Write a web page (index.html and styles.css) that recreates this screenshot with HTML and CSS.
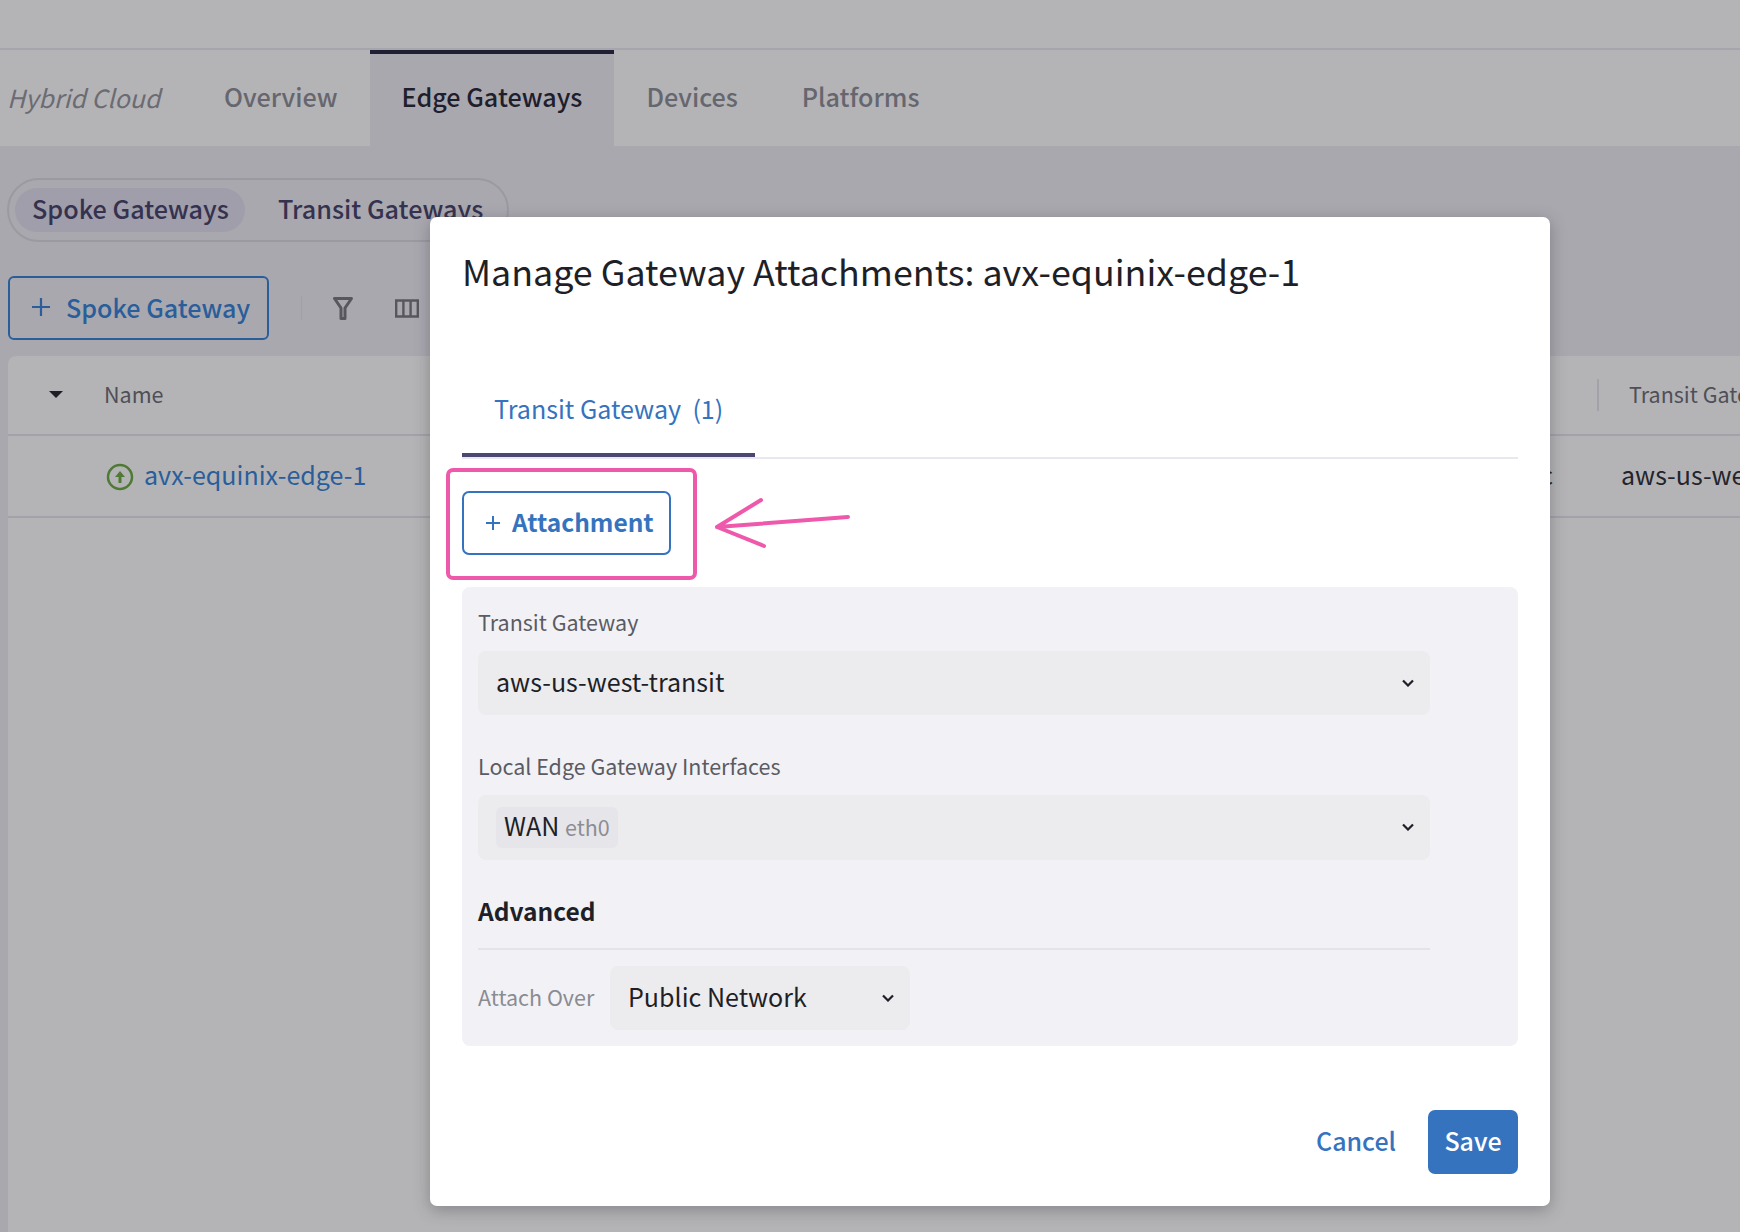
FILE: index.html
```html
<!DOCTYPE html>
<html lang="en">
<head>
<meta charset="utf-8">
<title>Manage Gateway Attachments</title>
<link rel="stylesheet" href="styles.css">
</head>
<body>
<div class="page">
  <div class="topbar"></div>
  <nav class="nav">
    <span class="crumb">Hybrid Cloud</span>
    <a class="nav-tab">Overview</a>
    <a class="nav-tab nav-active">Edge Gateways</a>
    <a class="nav-tab">Devices</a>
    <a class="nav-tab">Platforms</a>
  </nav>
  <main class="content">
    <div class="segmented">
      <span class="seg seg-on">Spoke Gateways</span>
      <span class="seg">Transit Gateways</span>
    </div>
    <div class="toolbar">
      <button class="add-btn"><svg class="add-plus" viewBox="0 0 20 20"><path d="M10 1v18M1 10h18"/></svg>Spoke Gateway</button>
      <span class="tool-sep"></span>
      <svg class="icon-filter" viewBox="0 0 20 23"><path d="M1.500 1.500h17l-6.500 9.500v10.500h-4V11z"/></svg>
      <svg class="icon-cols" viewBox="0 0 24 19"><path d="M1.200 1.500h21.600v16H1.200zM8.400 1.500v16M15.600 1.500v16"/></svg>
    </div>
    <section class="table">
      <div class="thead">
        <svg class="caret" viewBox="0 0 14 8"><path d="M0 0h14L7 7z"/></svg>
        <span class="th-name">Name</span>
        <span class="th-sep"></span>
        <span class="th-transit">Transit Gateway</span>
      </div>
      <div class="trow">
        <svg class="status" viewBox="0 0 28 28"><circle cx="14" cy="14" r="12"/><path class="status-fill" d="M14 8l5 6h-3.500v6h-3v-6H9z"/></svg>
        <a class="gw-link">avx-equinix-edge-1</a>
        <span class="td-hidden">public</span>
        <span class="td-transit">aws-us-west-transit</span>
      </div>
    </section>
  </main>

  <div class="modal">
    <h2 class="modal-title">Manage Gateway Attachments: avx-equinix-edge-1</h2>
    <div class="tabs">
      <span class="tab">Transit Gateway&nbsp; (1)</span>
    </div>
    <button class="attach-btn"><svg class="attach-plus" viewBox="0 0 16 16"><path d="M8 1v14M1 8h14"/></svg>Attachment</button>
    <div class="panel">
      <div class="label">Transit Gateway</div>
      <div class="select">
        <span>aws-us-west-transit</span>
        <svg class="chev" viewBox="0 0 12 8"><path d="M1 1.500l5 5 5-5"/></svg>
      </div>
      <div class="label label-next">Local Edge Gateway Interfaces</div>
      <div class="select select-multi">
        <span class="chip">WAN <small class="chip-sub">eth0</small></span>
        <svg class="chev" viewBox="0 0 12 8"><path d="M1 1.500l5 5 5-5"/></svg>
      </div>
      <div class="adv-title">Advanced</div>
      <div class="adv-row">
        <span class="adv-label">Attach Over</span>
        <div class="select select-small">
          <span>Public Network</span>
          <svg class="chev" viewBox="0 0 12 8"><path d="M1 1.500l5 5 5-5"/></svg>
        </div>
      </div>
    </div>
    <footer class="modal-foot">
      <button class="btn-cancel">Cancel</button>
      <button class="btn-save">Save</button>
    </footer>
    <div class="pink-box"></div>
    <svg class="pink-arrow" viewBox="0 0 140 56"><path d="M47 3L3 30l47 19M3 30l131-10"/></svg>
  </div>
</div>
</body>
</html>
```
FILE: styles.css
```css
* { box-sizing: border-box; }
html, body { margin: 0; height: 100%; }
body {
  font-family: "Noto Sans CJK SC", "Noto Sans", sans-serif;
  color: #1f1f27;
  overflow: hidden;
}
button { font-family: inherit; cursor: pointer; }
svg { display: block; flex: none; }

.page {
  position: relative;
  width: 1740px;
  height: 1232px;
  background: #a9a8af;
  overflow: hidden;
  display: flex;
  flex-direction: column;
}
.topbar {
  height: 50px;
  background: #b4b4b6;
  border-bottom: 2px solid #a6a5ad;
}
.nav {
  height: 96px;
  background: #b4b4b6;
  display: flex;
  align-items: stretch;
}
.crumb {
  width: 192px;
  padding-left: 7px;
  font-size: 25px;
  font-style: italic;
  line-height: 94px;
  color: #6b6b73;
}
.nav-tab {
  padding: 0 32px;
  font-size: 25.150px;
  font-weight: 500;
  line-height: 92px;
  color: #66666f;
}
.nav-active {
  color: #1f1e2c;
  background: #a9a8af;
  border-top: 4px solid #211f33;
  line-height: 84px;
}
.content {
  flex: 1;
  display: flex;
  flex-direction: column;
  padding: 32px 0 0 7px;
}
.segmented {
  width: 502px;
  height: 64px;
  border: 2px solid #9a9aa1;
  border-radius: 32px;
  padding: 8px 6px;
  display: flex;
  gap: 33px;
  align-items: stretch;
}
.seg {
  font-size: 25.200px;
  font-weight: 500;
  line-height: 41px;
  color: #35324f;
  white-space: nowrap;
}
.seg-on {
  background: #9f9eaa;
  border-radius: 22px;
  padding: 0 17px;
  width: 230px;
}
.toolbar {
  display: flex;
  align-items: center;
  margin: 34px 0 16px 1px;
}
.add-btn {
  flex: none;
  width: 261px;
  height: 64px;
  background: transparent;
  border: 2px solid #2a5e9b;
  border-radius: 6px;
  padding: 0 0 2px 21px;
  display: flex;
  align-items: center;
  gap: 15px;
  font-size: 25.100px;
  font-weight: 500;
  color: #2a5e9b;
  white-space: nowrap;
}
.add-plus { width: 20px; height: 20px; }
.add-plus path { stroke: #2a5e9b; stroke-width: 2.200; fill: none; }
.tool-sep {
  width: 1px;
  height: 24px;
  background: #9f9fa6;
  margin: 0 31px 0 32px;
}
.icon-filter { width: 20px; height: 23px; }
.icon-filter path { fill: none; stroke: #57575d; stroke-width: 3; stroke-linejoin: round; }
.icon-cols { width: 24px; height: 19px; margin-left: 42px; }
.icon-cols path { fill: none; stroke: #57575d; stroke-width: 2.400; }

.table {
  flex: 1;
  margin-left: 1px;
  background: #b4b4b6;
  border-radius: 8px 0 0 0;
}
.thead, .trow {
  display: flex;
  align-items: center;
  position: relative;
  border-bottom: 2px solid #a3a2aa;
}
.thead { height: 80px; }
.trow { height: 82px; }
.caret { width: 14px; height: 8px; margin-left: 41px; }
.caret path { fill: #1f1e24; }
.th-name { margin-left: 41px; padding-bottom: 4px; color: #4f4f57; font-size: 21.500px; }
.th-sep {
  width: 2px;
  height: 32px;
  background: #a3a2aa;
  margin-left: auto;
  margin-right: 30px;
}
.th-transit { width: 111px; padding-bottom: 4px; color: #4f4f57; font-size: 21.500px; white-space: nowrap; overflow: hidden; }
.status { width: 28px; height: 28px; margin: 2px 0 0 98px; }
.status circle { fill: none; stroke: #4f7a35; stroke-width: 2.500; }
.status-fill { fill: #4f7a35; }
.gw-link { margin-left: 10px; padding-bottom: 4px; color: #2a5e9b; font-size: 25.050px; }
.td-hidden { margin-left: auto; padding-bottom: 4px; font-size: 25px; }
.td-transit {
  width: 119px;
  margin-left: 68px;
  padding-bottom: 4px;
  overflow: hidden;
  white-space: nowrap;
  font-size: 25px;
  color: #24242c;
}

.modal {
  position: absolute;
  left: 430px;
  top: 217px;
  width: 1120px;
  background: #fff;
  border-radius: 7px;
  padding: 29px 32px 32px;
  box-shadow: 0 4px 16px rgba(50, 50, 60, 0.35);
}
.modal-title {
  margin: 0;
  font-size: 35.800px;
  font-weight: 400;
  line-height: 48px;
  color: #1f1f27;
  white-space: nowrap;
}
.tabs {
  margin-top: 68px;
  border-bottom: 2px solid #e8e8ee;
  display: flex;
}
.tab {
  padding: 28px 32px 27px;
  font-size: 25.100px;
  line-height: 36px;
  color: #3573bf;
  border-bottom: 4px solid #4b4672;
  white-space: nowrap;
}
.attach-btn {
  margin-top: 32px;
  width: 209px;
  height: 64px;
  display: flex;
  align-items: center;
  gap: 11px;
  padding: 0 0 3px 21px;
  background: #fff;
  border: 2px solid #3573bf;
  border-radius: 7px;
  font-size: 24.500px;
  font-weight: 600;
  color: #3573bf;
  white-space: nowrap;
}
.attach-plus { width: 16px; height: 16px; margin-top: 2px; }
.attach-plus path { stroke: #3573bf; stroke-width: 2; fill: none; }
.panel {
  margin-top: 32px;
  background: #f2f2f6;
  border-radius: 8px;
  padding: 20px 88px 16px 16px;
}
.label {
  font-size: 21.500px;
  line-height: 30px;
  height: 32px;
  color: #5b5b63;
  margin-bottom: 12px;
}
.label-next { margin-top: 36px; }
.select {
  height: 64px;
  background: #ececef;
  border-radius: 8px;
  padding: 0 16px 4px 18px;
  display: flex;
  align-items: center;
  justify-content: space-between;
  font-size: 25.050px;
  color: #1f1f27;
}
.select-multi { height: 65px; padding-bottom: 0; }
.chip {
  background: #e6e6ea;
  border-radius: 6px;
  height: 41px;
  width: 122px;
  padding: 0 8px;
  line-height: 37px;
  white-space: nowrap;
}
.chip-sub { font-size: 21.500px; color: #8d8d94; }
.chev { width: 12px; height: 8px; margin-top: 4px; }
.select-multi .chev { margin-top: 0; margin-bottom: 2px; }
.chev path { fill: none; stroke: #1f1f27; stroke-width: 2.200; }
.adv-title {
  margin-top: 33px;
  padding-bottom: 19px;
  font-size: 24.500px;
  font-weight: 600;
  line-height: 36px;
  border-bottom: 2px solid #e3e3e8;
}
.adv-row {
  margin-top: 16px;
  display: flex;
  align-items: center;
  gap: 15px;
}
.adv-label { width: 117px; font-size: 21.500px; line-height: 28px; margin-bottom: 2px; color: #8b8b92; white-space: nowrap; }
.select-small { width: 300px; }
.modal-foot {
  margin-top: 64px;
  display: flex;
  justify-content: flex-end;
  align-items: center;
  gap: 32px;
}
.btn-cancel {
  background: none;
  border: 0;
  padding: 0 0 4px;
  font-size: 25px;
  font-weight: 500;
  color: #3573bf;
}
.btn-save {
  width: 90px;
  height: 64px;
  background: #3573bf;
  border: 0;
  border-radius: 7px;
  padding: 0 0 4px;
  font-size: 25px;
  font-weight: 500;
  color: #fff;
}
.pink-box {
  position: absolute;
  left: 16px;
  top: 251px;
  width: 251px;
  height: 112px;
  border: 4px solid #ef59ab;
  border-radius: 7px;
}
.pink-arrow {
  position: absolute;
  left: 284px;
  top: 280px;
  width: 140px;
  height: 56px;
}
.pink-arrow path {
  fill: none;
  stroke: #ef59ab;
  stroke-width: 4;
  stroke-linecap: round;
  stroke-linejoin: round;
}
```
